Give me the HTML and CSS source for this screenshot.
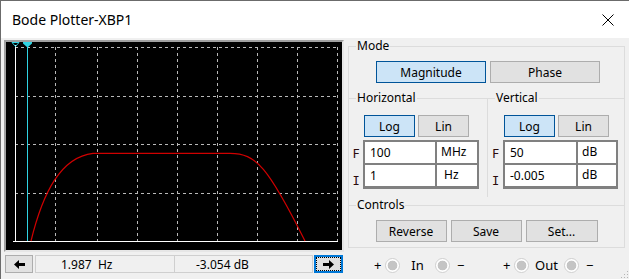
FILE: index.html
```html
<!DOCTYPE html>
<html>
  <head>
    <title>Bode Plotter-XBP1</title>
    <meta charset="utf-8" />
    <link rel="stylesheet" href="styles.css">
  </head>
  <body>
    <div class="window">
      <div class="titlebar">
        <span class="title">Bode Plotter-XBP1</span>
        <svg class="close" width="12" height="12" viewBox="0 0 12 12">
          <path d="M0.5 0.5L11.5 11.5M11.5 0.5L0.5 11.5" stroke="#000" stroke-width="1" fill="none" />
        </svg>
      </div>

      <div class="content">
        <div class="left">
          <div class="screen">
            <svg class="plot" width="336" height="208" viewBox="0 0 336 208">
              <g stroke="#b9b9b9" stroke-dasharray="3 3" fill="none" shape-rendering="crispEdges">
                <path d="M9 5.5H331M9 54.5H331M9 102.5H331M9 151.5H331" />
                <path d="M49.5 5V199M91.5 5V199M131.5 5V199M171.5 5V199M211.5 5V199M251.5 5V199M291.5 5V199M331.5 5V199" />
              </g>
              <g shape-rendering="crispEdges">
                <path d="M7 199.5H332" stroke="#fff" />
                <path d="M9.5 3V199" stroke="#fff" />
                <path d="M21.5 0V199" stroke="#2fd3e3" />
              </g>
              <path d="M6 0.5H13L9.5 4.5Z" stroke="#2fd3e3" fill="none" />
              <path d="M17 0H26V1.5L21.5 5.5L17 1.5Z" fill="#2fd3e3" />
              <path d="M25 199C37 150 55 115 87 111.3H224C250 111.3 262 125 299 199" stroke="#d00000" stroke-width="1.2" fill="none" />
            </svg>
          </div>
          <div class="readout">
            <div class="btn arrow">
              <svg width="11" height="9" viewBox="0 0 11 9"><path d="M0 4.5L5 0V3H11V6H5V9Z" fill="#000" /></svg>
            </div>
            <div class="field freq">1.987&nbsp; Hz</div>
            <div class="field gain">-3.054 dB</div>
            <div class="btn arrow focus">
              <svg width="11" height="9" viewBox="0 0 11 9"><path d="M11 4.5L6 0V3H0V6H6V9Z" fill="#000" /></svg>
            </div>
          </div>
        </div>

        <div class="right">
          <fieldset class="group mode">
            <legend>Mode</legend>
            <div class="mode-buttons">
              <div class="btn wide on">Magnitude</div>
              <div class="btn wide">Phase</div>
            </div>

            <div class="axes">
              <fieldset class="group axis horiz">
                <legend>Horizontal</legend>
                <div class="scale">
                  <div class="btn small on">Log</div>
                  <div class="btn small">Lin</div>
                </div>
                <div class="entry">
                  <div class="marks">
                    <span class="mark">F</span>
                    <span class="mark low">I</span>
                  </div>
                  <div class="box">
                    <div class="val">100</div>
                    <div class="unit">MHz</div>
                    <div class="val">1</div>
                    <div class="unit">&nbsp;Hz</div>
                  </div>
                </div>
              </fieldset>

              <fieldset class="group axis vert">
                <legend>Vertical</legend>
                <div class="scale">
                  <div class="btn small on">Log</div>
                  <div class="btn small">Lin</div>
                </div>
                <div class="entry">
                  <div class="marks">
                    <span class="mark">F</span>
                    <span class="mark low">I</span>
                  </div>
                  <div class="box">
                    <div class="val">50</div>
                    <div class="unit">dB</div>
                    <div class="val">-0.005</div>
                    <div class="unit">dB</div>
                  </div>
                </div>
              </fieldset>
            </div>

            <fieldset class="group controls">
              <legend>Controls</legend>
              <div class="ctrl-buttons">
                <div class="btn ctrl">Reverse</div>
                <div class="btn ctrl">Save</div>
                <div class="btn ctrl">Set...</div>
              </div>
            </fieldset>
          </fieldset>

          <div class="terminals">
            <div class="term">
              <span class="sign">+</span>
              <span class="jack"></span>
              <span class="term-name">In</span>
              <span class="jack"></span>
              <span class="sign minus">&minus;</span>
            </div>
            <div class="term">
              <span class="sign">+</span>
              <span class="jack"></span>
              <span class="term-name">Out</span>
              <span class="jack"></span>
              <span class="sign minus">&minus;</span>
            </div>
          </div>
        </div>
      </div>

      <svg class="grip" width="9" height="9" viewBox="0 0 9 9">
        <g fill="#b5b5b5">
          <rect x="7" y="1" width="1" height="1" />
          <rect x="4" y="4" width="1" height="1" />
          <rect x="7" y="4" width="1" height="1" />
          <rect x="1" y="7" width="1" height="1" />
          <rect x="4" y="7" width="1" height="1" />
          <rect x="7" y="7" width="1" height="1" />
        </g>
      </svg>
    </div>
  </body>
</html>
```

FILE: styles.css
```css
* {
  box-sizing: border-box;
}
body {
  margin: 0;
  background: #f0f0f0;
  font-family: "Noto Sans", "Open Sans", sans-serif;
  font-size: 12px;
  color: #000;
}
.window {
  position: relative;
  width: 629px;
  height: 279px;
  border-top: 1px solid #6b6b6b;
  border-left: 1px solid #6b6b6b;
  overflow: hidden;
}
.titlebar {
  height: 37px;
  background: #fff;
  display: flex;
  align-items: center;
  justify-content: space-between;
  padding: 0 15px 0 11px;
}
.title {
  font-size: 14px;
}
.close {
  display: block;
}

.content {
  display: flex;
  padding-left: 3px;
}
.left {
  width: 340px;
}
.screen {
  margin-top: 2px;
  height: 212px;
  border: 2px solid;
  border-color: #a0a0a0 #e6e6e6 #e6e6e6 #a0a0a0;
  background: #000;
}
.plot {
  display: block;
}

.readout {
  display: flex;
  height: 18px;
  margin: 3px 0 0 1px;
}
.field {
  display: flex;
  align-items: center;
  width: 139px;
  border: 1px solid #cfcfcf;
  border-right: none;
  background: #f0f0f0;
}
.freq {
  margin-left: 2px;
  padding-left: 25px;
}
.gain {
  padding-left: 21px;
  border-right: 1px solid #cfcfcf;
}

.btn {
  display: flex;
  align-items: center;
  justify-content: center;
  height: 22px;
  border: 1px solid #adadad;
  background: #e1e1e1;
}
.btn.on {
  border-color: #005499;
  background: #cce4f7;
}
.arrow {
  width: 28px;
  height: 18px;
}
.arrow.focus {
  width: 29px;
  margin-left: 1px;
  border: 2px solid #0078d7;
  outline: 1px dotted #000;
  outline-offset: -3px;
}
.wide {
  width: 110px;
}
.small {
  width: 51px;
}
.ctrl {
  width: 71px;
}
.ctrl:last-child {
  width: 72px;
}

.right {
  width: 277px;
  margin-left: 4px;
}
.group {
  margin: 0;
  padding: 0;
  min-width: 0;
  border: 1px solid #dcdcdc;
}
.group legend {
  margin-left: 7px;
  padding: 0 1px;
  line-height: 16px;
}
.mode {
  padding-bottom: 5px;
}
.mode-buttons {
  display: flex;
  justify-content: center;
  gap: 4px;
  margin-top: 7px;
  padding-left: 3px;
}

.axes {
  display: flex;
  margin-top: 7px;
}
.axis {
  border-width: 1px 0 0 0;
  padding-bottom: 8px;
}
.horiz {
  width: 139px;
  border-right-width: 1px;
}
.vert {
  flex: 1;
}
.scale {
  display: flex;
  gap: 3px;
  margin: 9px 0 0 15px;
}
.vert .scale {
  margin-left: 16px;
}
.entry {
  display: flex;
  margin-top: 3px;
}
.marks {
  display: flex;
  flex-direction: column;
  width: 14px;
  padding-top: 3px;
}
.vert .marks {
  width: 15px;
}
.mark {
  height: 23px;
  line-height: 23px;
  text-align: center;
  font-family: "DejaVu Sans Mono", monospace;
  font-size: 12px;
  color: #2a0c0c;
}
.mark.low {
  padding-top: 4px;
}
.box {
  display: grid;
  grid-template-columns: 70px 40px;
  grid-template-rows: 21px 21px;
  gap: 2px;
  padding: 2px;
  background: #808080;
}
.vert .box {
  grid-template-columns: 71px 38px;
}
.val {
  display: flex;
  align-items: center;
  padding-left: 5px;
  background: #fff;
}
.unit {
  display: flex;
  align-items: center;
  padding: 0 0 3px 4px;
  background: #fff;
}

.controls {
  border-width: 1px 0 0 0;
}
.ctrl-buttons {
  display: flex;
  justify-content: center;
  gap: 4px;
  margin-top: 7px;
}

.terminals {
  display: flex;
  align-items: center;
  gap: 39px;
  height: 16px;
  margin-top: 9px;
  padding-left: 26px;
}
.term {
  display: flex;
  align-items: center;
}
.sign {
  width: 7px;
  margin-right: 4px;
  text-align: center;
  font-size: 13px;
}
.sign.minus {
  margin: 0 0 0 7px;
}
.term-name {
  width: 35px;
  text-align: center;
  font-size: 13px;
}
.jack {
  width: 15px;
  height: 15px;
  border: 1px solid #d0d0d0;
  border-radius: 50%;
  background: radial-gradient(circle, #c4c4c4 0 4.5px, #fff 5.2px);
}

.grip {
  position: absolute;
  right: 0;
  bottom: 0;
}
```
